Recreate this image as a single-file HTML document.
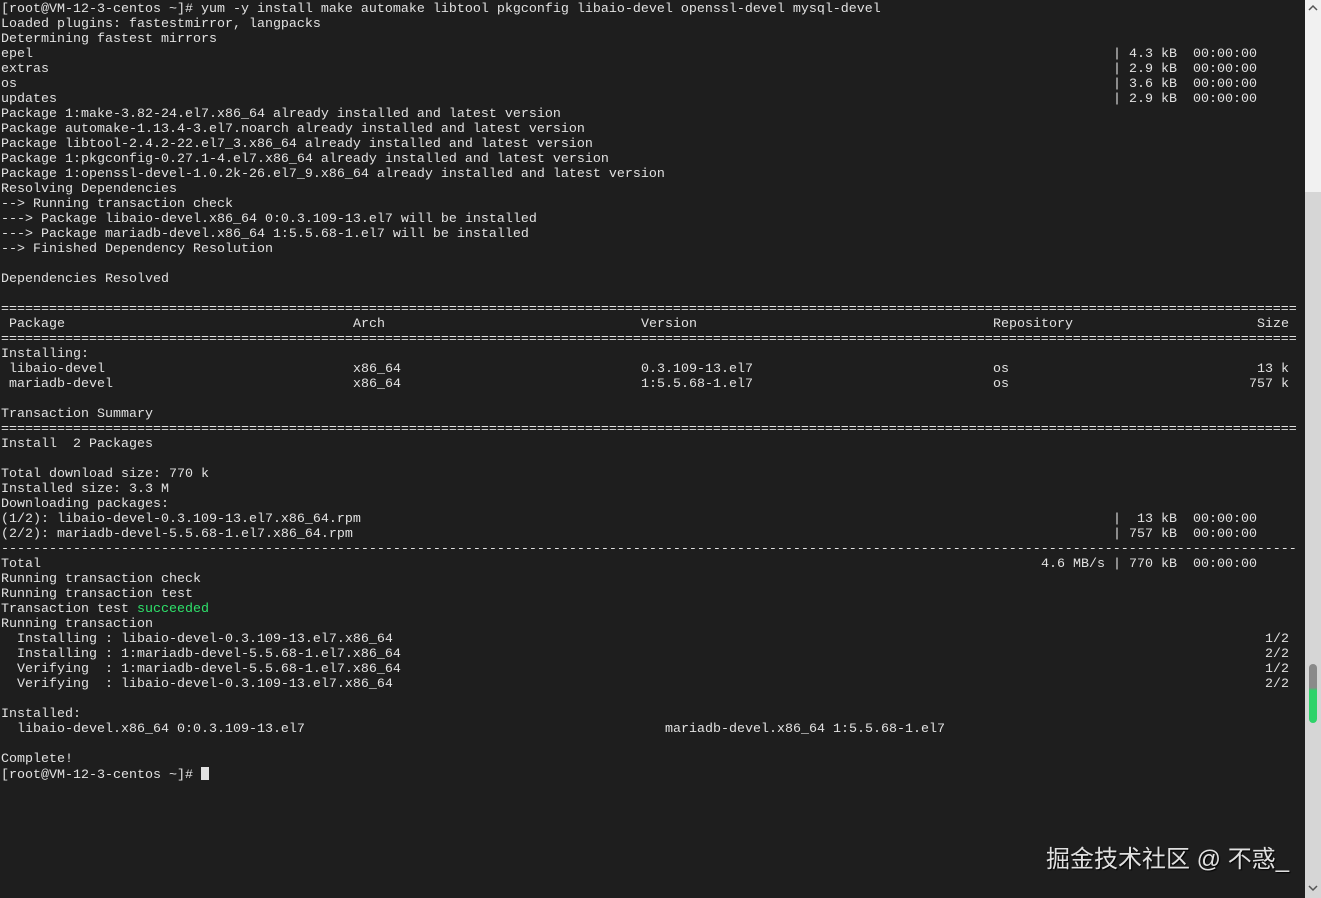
<!DOCTYPE html>
<html><head><meta charset="utf-8"><style>
html,body{margin:0;padding:0;}
body{width:1321px;height:898px;background:#1e1e1e;position:relative;overflow:hidden;font-family:"Liberation Mono","DejaVu Sans Mono",monospace;font-size:13.33px;color:#e2e2e2;}
#t{position:absolute;left:0;top:2px;width:1305px;height:896px;}
.l{position:absolute;left:1px;height:15px;line-height:15px;white-space:pre;}
.s{position:absolute;top:0;white-space:pre;}
.eq{width:1296px;overflow:hidden;}
.g{color:#2ee06a;}
#sb{position:absolute;left:1305px;top:0;width:16px;height:898px;background:#d6d6d6;}
#sbt{position:absolute;left:0;top:0;width:16px;height:192px;background:#f1f1f1;}
#thumb{position:absolute;left:4px;top:664px;width:8px;height:59px;border-radius:4px;background:linear-gradient(#8a8a8a 0,#8a8a8a 40%,#2ed36a 45%,#2ed36a 100%);}
#wm{position:absolute;left:1046px;top:839px;font-family:"Liberation Sans","Noto Sans CJK SC",sans-serif;font-size:24px;color:#e0e0e0;text-shadow:1px 1px 1px #000;white-space:nowrap;}
.cur{display:inline-block;width:8px;height:13px;background:#e2e2e2;vertical-align:-2px;}
</style></head><body>
<div id="t">
<div class="l" style="top:0">[root@VM-12-3-centos ~]# yum -y install make automake libtool pkgconfig libaio-devel openssl-devel mysql-devel</div>
<div class="l" style="top:15px">Loaded plugins: fastestmirror, langpacks</div>
<div class="l" style="top:30px">Determining fastest mirrors</div>
<div class="l" style="top:45px">epel<span class="s" style="left:1112px">| 4.3 kB  00:00:00</span></div>
<div class="l" style="top:60px">extras<span class="s" style="left:1112px">| 2.9 kB  00:00:00</span></div>
<div class="l" style="top:75px">os<span class="s" style="left:1112px">| 3.6 kB  00:00:00</span></div>
<div class="l" style="top:90px">updates<span class="s" style="left:1112px">| 2.9 kB  00:00:00</span></div>
<div class="l" style="top:105px">Package 1:make-3.82-24.el7.x86_64 already installed and latest version</div>
<div class="l" style="top:120px">Package automake-1.13.4-3.el7.noarch already installed and latest version</div>
<div class="l" style="top:135px">Package libtool-2.4.2-22.el7_3.x86_64 already installed and latest version</div>
<div class="l" style="top:150px">Package 1:pkgconfig-0.27.1-4.el7.x86_64 already installed and latest version</div>
<div class="l" style="top:165px">Package 1:openssl-devel-1.0.2k-26.el7_9.x86_64 already installed and latest version</div>
<div class="l" style="top:180px">Resolving Dependencies</div>
<div class="l" style="top:195px">--&gt; Running transaction check</div>
<div class="l" style="top:210px">---&gt; Package libaio-devel.x86_64 0:0.3.109-13.el7 will be installed</div>
<div class="l" style="top:225px">---&gt; Package mariadb-devel.x86_64 1:5.5.68-1.el7 will be installed</div>
<div class="l" style="top:240px">--&gt; Finished Dependency Resolution</div>
<div class="l" style="top:270px">Dependencies Resolved</div>
<div class="l eq" style="top:300px">==================================================================================================================================================================================</div>
<div class="l" style="top:315px"> Package<span class="s" style="left:352px">Arch</span><span class="s" style="left:640px">Version</span><span class="s" style="left:992px">Repository</span><span class="s" style="left:1256px">Size</span></div>
<div class="l eq" style="top:330px">==================================================================================================================================================================================</div>
<div class="l" style="top:345px">Installing:</div>
<div class="l" style="top:360px"> libaio-devel<span class="s" style="left:352px">x86_64</span><span class="s" style="left:640px">0.3.109-13.el7</span><span class="s" style="left:992px">os</span><span class="s" style="left:1248px"> 13 k</span></div>
<div class="l" style="top:375px"> mariadb-devel<span class="s" style="left:352px">x86_64</span><span class="s" style="left:640px">1:5.5.68-1.el7</span><span class="s" style="left:992px">os</span><span class="s" style="left:1248px">757 k</span></div>
<div class="l" style="top:405px">Transaction Summary</div>
<div class="l eq" style="top:420px">==================================================================================================================================================================================</div>
<div class="l" style="top:435px">Install  2 Packages</div>
<div class="l" style="top:465px">Total download size: 770 k</div>
<div class="l" style="top:480px">Installed size: 3.3 M</div>
<div class="l" style="top:495px">Downloading packages:</div>
<div class="l" style="top:510px">(1/2): libaio-devel-0.3.109-13.el7.x86_64.rpm<span class="s" style="left:1112px">|  13 kB  00:00:00</span></div>
<div class="l" style="top:525px">(2/2): mariadb-devel-5.5.68-1.el7.x86_64.rpm<span class="s" style="left:1112px">| 757 kB  00:00:00</span></div>
<div class="l eq" style="top:540px">----------------------------------------------------------------------------------------------------------------------------------------------------------------------------------</div>
<div class="l" style="top:555px">Total<span class="s" style="left:1040px">4.6 MB/s | 770 kB  00:00:00</span></div>
<div class="l" style="top:570px">Running transaction check</div>
<div class="l" style="top:585px">Running transaction test</div>
<div class="l" style="top:600px">Transaction test <span class="g">succeeded</span></div>
<div class="l" style="top:615px">Running transaction</div>
<div class="l" style="top:630px">  Installing : libaio-devel-0.3.109-13.el7.x86_64<span class="s" style="left:1264px">1/2</span></div>
<div class="l" style="top:645px">  Installing : 1:mariadb-devel-5.5.68-1.el7.x86_64<span class="s" style="left:1264px">2/2</span></div>
<div class="l" style="top:660px">  Verifying  : 1:mariadb-devel-5.5.68-1.el7.x86_64<span class="s" style="left:1264px">1/2</span></div>
<div class="l" style="top:675px">  Verifying  : libaio-devel-0.3.109-13.el7.x86_64<span class="s" style="left:1264px">2/2</span></div>
<div class="l" style="top:705px">Installed:</div>
<div class="l" style="top:720px">  libaio-devel.x86_64 0:0.3.109-13.el7<span class="s" style="left:664px">mariadb-devel.x86_64 1:5.5.68-1.el7</span></div>
<div class="l" style="top:750px">Complete!</div>
<div class="l" style="top:765px">[root@VM-12-3-centos ~]# <span class="cur"></span></div>
</div>
<div id="wm">掘金技术社区 @ 不惑_</div>
<div id="sb"><div id="sbt"></div>
<svg style="position:absolute;left:3px;top:4px" width="10" height="8"><path d="M1 6 L5 2 L9 6" stroke="#555" stroke-width="1.5" fill="none"/></svg>
<div id="thumb"></div>
<svg style="position:absolute;left:3px;top:884px" width="10" height="8"><path d="M1 2 L5 6 L9 2" stroke="#555" stroke-width="1.5" fill="none"/></svg>
</div>
</body></html>
